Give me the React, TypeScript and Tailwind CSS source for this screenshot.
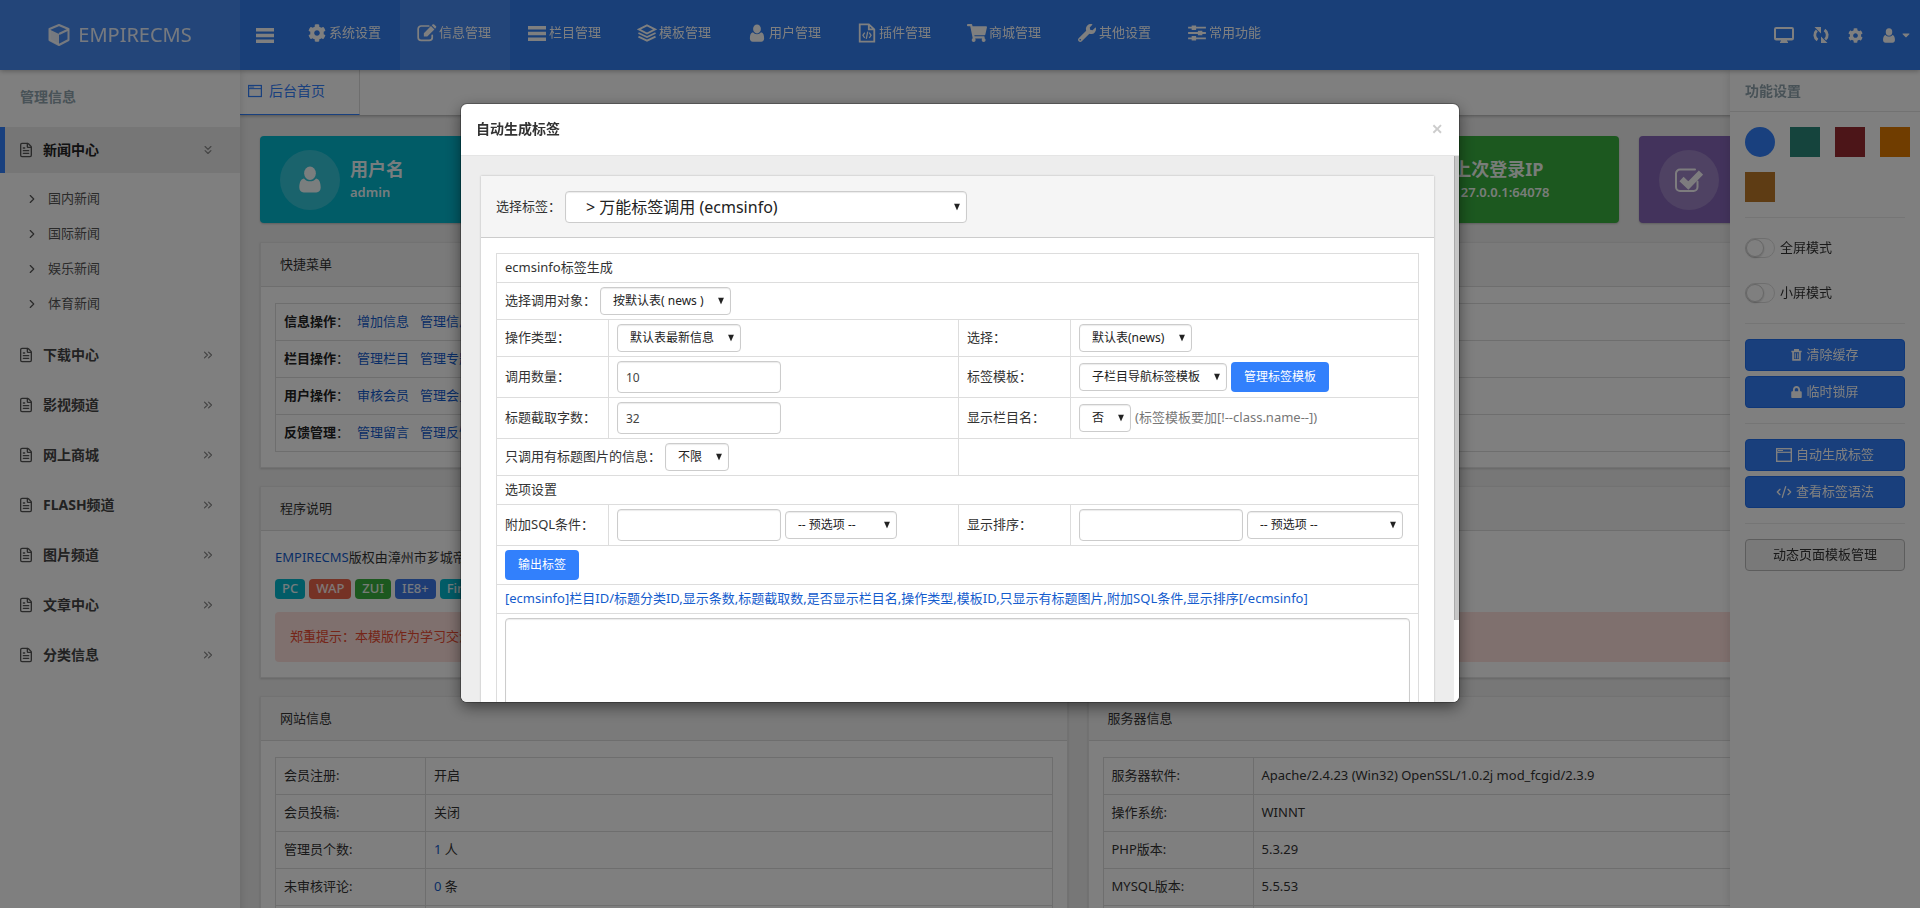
import type { ReactNode } from 'react';
import { FaCaretDown, FaCog, FaLock, FaShoppingCart, FaWrench } from 'react-icons/fa';
import { ChevronRight, ChevronsDown, ChevronsRight, CodeXml, FileText, Layers } from 'lucide-react';

interface IconProps {
  className?: string;
}

const CubeIcon = ({ className }: IconProps) => (
  <svg viewBox="0 0 22 22" className={className} aria-hidden="true">
    <path d="M11 1 L20.5 5 V16 L11 21 L1.5 16 V5 Z" fill="none" stroke="currentColor" strokeWidth="2" strokeLinejoin="round" />
    <path d="M1.5 5.5 L11 10 V21 L1.5 16 Z" fill="currentColor" />
    <path d="M11 10 L20.5 5.5" fill="none" stroke="currentColor" strokeWidth="2" />
  </svg>
);

const BarsIcon = ({ className }: IconProps) => (
  <svg viewBox="0 0 18 15" className={className} fill="currentColor" aria-hidden="true">
    <path d="M0 0 H18 V3.500 H0 Z M0 5.750 H18 V9.250 H0 Z M0 11.500 H18 V15 H0 Z" />
  </svg>
);

const UserIcon = ({ className }: IconProps) => (
  <svg viewBox="0 0 20 24" className={className} fill="currentColor" aria-hidden="true">
    <ellipse cx="10" cy="6.5" rx="5.2" ry="6" />
    <path d="M4.6 11 C1.5 11.6 .5 15 .5 19.2 C.5 21.8 2 23.5 4.4 23.5 H15.6 C18 23.5 19.5 21.8 19.5 19.2 C19.5 15 18.5 11.6 15.4 11 C14 12.7 12.2 13.6 10 13.6 C7.800 13.6 6 12.700 4.6 11 Z" />
  </svg>
);

const EditIcon = ({ className }: IconProps) => (
  <svg viewBox="0 0 22 20" className={className} aria-hidden="true">
    <path d="M13 2.200 H4.500 A3.300 3.300 0 0 0 1.200 5.500 V15 A3.300 3.300 0 0 0 4.500 18.300 H13.500 A3.300 3.300 0 0 0 16.800 15 V12.500" fill="none" stroke="currentColor" strokeWidth="1.900" strokeLinecap="round" />
    <path d="M7.500 14 V10.200 L15.400 2.300 L19.200 6.100 L11.300 14 Z M16.300 1.400 L17.500 .4 Q18.300 -.1 19 .6 L21 2.600 Q21.600 3.300 21 4 L20 5.200 Z" fill="currentColor" />
  </svg>
);

const CheckIcon = ({ className }: IconProps) => (
  <svg viewBox="0 0 28 24" className={className} aria-hidden="true">
    <path d="M20 1.500 H5 A4 4 0 0 0 1 5.500 V19 A4 4 0 0 0 5 23 H18.500 A4 4 0 0 0 22.500 19 V13.500" fill="none" stroke="currentColor" strokeWidth="2" strokeLinecap="round" />
    <path d="M6.500 11 L13.300 17.500 L26 4.500" fill="none" stroke="currentColor" strokeWidth="6" />
  </svg>
);

const FileCodeIcon = ({ className }: IconProps) => (
  <svg viewBox="0 0 18 22" className={className} fill="none" stroke="currentColor" strokeWidth="2" aria-hidden="true">
    <path d="M1 1.500 H11 L17 7 V20.500 H1 Z M11 1.500 V7 H17" />
    <path d="M6.500 10.500 L4.500 13.500 L6.500 16.500 M11.500 10.500 L13.500 13.500 L11.500 16.500 M9.800 9.500 L8.200 17.500" strokeWidth="1.400" />
  </svg>
);

const LayersIcon = ({ className }: IconProps) => (
  <svg viewBox="0 0 22 20" className={className} fill="none" stroke="currentColor" strokeWidth="2" aria-hidden="true">
    <path d="M11 1.500 L20 6 L11 10.500 L2 6 Z M1.500 10 L11 14.500 L20.500 10 M1.500 14 L11 18.500 L20.500 14" />
  </svg>
);

const SlidersIcon = ({ className }: IconProps) => (
  <svg viewBox="0 0 20 18" className={className} fill="currentColor" aria-hidden="true">
    <path d="M0 2 H4 V0.500 H9 V2 H20 V4 H9 V5.500 H4 V4 H0 Z M0 8 H11 V6.500 H16 V8 H20 V10 H16 V11.500 H11 V10 H0 Z M0 14 H4 V12.500 H9 V14 H20 V16 H9 V17.500 H4 V16 H0 Z" />
  </svg>
);

const DesktopIcon = ({ className }: IconProps) => (
  <svg viewBox="0 0 20 16" className={className} aria-hidden="true">
    <rect x="1" y="1" width="18" height="11.500" rx="1.200" fill="none" stroke="currentColor" strokeWidth="2" />
    <path d="M1 11 H19 V13 H13 V14.500 H14 V16 H6 V14.500 H7 V13 H1 Z" fill="currentColor" />
  </svg>
);

const SyncIcon = ({ className }: IconProps) => (
  <svg viewBox="0 0 16 18" className={className} aria-hidden="true">
    <path d="M4.500 14 A6 6 0 0 1 3.800 4.500 M11.500 4 A6 6 0 0 1 12.200 13.500" fill="none" stroke="currentColor" strokeWidth="2.800" />
    <path d="M1.500 1 H8 V7.500 Z M14.500 17 H8 V10.500 Z" fill="currentColor" />
  </svg>
);

const TrashIcon = ({ className }: IconProps) => (
  <svg viewBox="0 0 12 14" className={className} aria-hidden="true">
    <path d="M0 3 H12 M4 2.500 V1 H8 V2.500" fill="none" stroke="currentColor" strokeWidth="1.800" />
    <path d="M2 3 V12.800 H10 V3" fill="none" stroke="currentColor" strokeWidth="2" />
    <path d="M4.500 5 V11 M7.500 5 V11" stroke="currentColor" strokeWidth="1.200" />
  </svg>
);

const WindowIcon = ({ className }: IconProps) => (
  <svg viewBox="0 0 16 14" className={className} fill="none" stroke="currentColor" aria-hidden="true">
    <rect x=".700" y=".700" width="14.600" height="12.600" strokeWidth="1.400" />
    <path d="M1 4.300 H15" strokeWidth="1.200" />
    <path d="M2 2.500 H7" strokeWidth="1" />
  </svg>
);

const navItems = [
  { label: '系统设置', icon: <FaCog className="w-[18px] h-[18px]" /> },
  { label: '信息管理', icon: <EditIcon className="w-5 h-[18px]" />, active: true },
  { label: '栏目管理', icon: <BarsIcon className="w-[18px] h-[15px]" /> },
  { label: '模板管理', icon: <LayersIcon className="w-5 h-[18px]" /> },
  { label: '用户管理', icon: <UserIcon className="w-4 h-[18px]" /> },
  { label: '插件管理', icon: <FileCodeIcon className="w-[18px] h-5" /> },
  { label: '商城管理', icon: <FaShoppingCart className="w-5 h-[18px]" /> },
  { label: '其他设置', icon: <FaWrench className="w-[18px] h-[18px]" /> },
  { label: '常用功能', icon: <SlidersIcon className="w-[18px] h-4" /> },
];

const subItems = ['国内新闻', '国际新闻', '娱乐新闻', '体育新闻'];
const channels = ['下载中心', '影视频道', '网上商城', 'FLASH频道', '图片频道', '文章中心', '分类信息'];

const quickLinks = [
  { name: '信息操作', links: ['增加信息', '管理信息'] },
  { name: '栏目操作', links: ['管理栏目', '管理专题'] },
  { name: '用户操作', links: ['审核会员', '管理会员'] },
  { name: '反馈管理', links: ['管理留言', '管理反馈'] },
];

const tags = [
  { name: 'PC', color: 'bg-[#03b8cf]' },
  { name: 'WAP', color: 'bg-[#ea644a]' },
  { name: 'ZUI', color: 'bg-[#38b03f]' },
  { name: 'IE8+', color: 'bg-[#3c78e8]' },
  { name: 'Fire', color: 'bg-[#03b8cf]' },
];

const siteInfo: [string, ReactNode][] = [
  ['会员注册:', '开启'],
  ['会员投稿:', '关闭'],
  ['管理员个数:', <><a href="#admins" className="text-[#145ccd]">1</a> 人</>],
  ['未审核评论:', <><a href="#comments" className="text-[#145ccd]">0</a> 条</>],
  ['', ''],
];

const serverInfo: [string, ReactNode][] = [
  ['服务器软件:', 'Apache/2.4.23 (Win32) OpenSSL/1.0.2j mod_fcgid/2.3.9'],
  ['操作系统:', 'WINNT'],
  ['PHP版本:', '5.3.29'],
  ['MYSQL版本:', '5.5.53'],
  ['', ''],
];

const Header = () => (
  <header className="relative z-20 flex h-[70px] shrink-0 bg-[#327ef0] text-white shadow-[0_1px_5px_rgba(0,0,0,0.3)]">
    <a href="#home" className="flex w-60 shrink-0 items-center justify-center gap-2 bg-white/10 text-xl text-white/90">
      <CubeIcon className="h-[22px] w-[22px]" />
      EMPIRECMS
    </a>
    <button type="button" aria-label="折叠菜单" className="flex w-[50px] shrink-0 items-center justify-center">
      <BarsIcon className="h-[15px] w-[18px]" />
    </button>
    <nav className="flex">
      {navItems.map((item) => (
        <a
          key={item.label}
          href="#nav"
          className={`flex w-[110px] items-center justify-center gap-0.5 pb-1 pr-0.5 ${item.active ? 'bg-white/10' : ''}`}
        >
          <span className="flex w-5 justify-center">{item.icon}</span>
          {item.label}
        </a>
      ))}
    </nav>
    <div className="ml-auto flex items-center gap-[19px] pr-2.5">
      <button type="button" aria-label="网站首页"><DesktopIcon className="h-4 w-5" /></button>
      <button type="button" aria-label="刷新"><SyncIcon className="h-[18px] w-4" /></button>
      <button type="button" aria-label="设置"><FaCog className="h-[15px] w-[15px]" /></button>
      <button type="button" aria-label="用户" className="flex items-center gap-1.5">
        <UserIcon className="h-[15px] w-3.5" />
        <FaCaretDown className="h-3 w-2" />
      </button>
    </div>
  </header>
);

const Sidebar = () => (
  <aside className="z-10 w-60 shrink-0 bg-white shadow-[0_0_8px_rgba(0,0,0,0.15)]">
    <h2 className="flex h-[57px] items-center pb-1 pl-5 text-sm font-bold text-[#90a4ae]">管理信息</h2>
    <a href="#news" className="flex h-[46px] items-center border-l-[5px] border-[#3280fc] bg-[#ececec] pl-[13px] pr-[25px] text-sm font-bold text-[#222]">
      <FileText className="mr-[9px] h-4 w-4 text-[#555]" />
      新闻中心
      <ChevronsDown className="ml-auto h-3.5 w-3.5 text-[#888]" />
    </a>
    <ul className="pb-[11px] pt-2">
      {subItems.map((item) => (
        <li key={item}>
          <a href="#sub" className="flex h-[35px] items-center pl-[25px] text-[#555]">
            <ChevronRight className="mr-[9px] h-3.5 w-3.5" />
            {item}
          </a>
        </li>
      ))}
    </ul>
    {channels.map((item) => (
      <a key={item} href="#channel" className="mb-1 flex h-[46px] items-center pl-[18px] pr-[25px] text-sm font-bold text-[#444]">
        <FileText className="mr-[9px] h-4 w-4 text-[#555]" />
        {item}
        <ChevronsRight className="ml-auto h-3.5 w-3.5 text-[#888]" />
      </a>
    ))}
  </aside>
);

const Panel = ({ title, children }: { title: string; children: ReactNode }) => (
  <section className="border border-[#e4e4e4] bg-white shadow-[0_1px_2px_rgba(0,0,0,0.15)]">
    <h3 className="flex h-11 items-center border-b border-[#ddd] bg-[#f5f5f5] pl-[19px]">{title}</h3>
    <div className="px-3.5 pb-[15px] pt-4">{children}</div>
  </section>
);

const StatCard = ({ title, value, icon, className }: { title: string; value: string; icon: ReactNode; className: string }) => (
  <div className={`flex h-[87px] items-center overflow-hidden rounded pl-5 text-white/95 shadow-[0_1px_2px_rgba(0,0,0,0.2)] ${className}`}>
    <span className="mr-2.5 flex h-[60px] w-[60px] shrink-0 items-center justify-center rounded-full bg-white/20">{icon}</span>
    <div className="whitespace-nowrap">
      <h4 className="text-lg leading-6 font-bold">{title}</h4>
      <p className="leading-[22px] font-semibold">{value}</p>
    </div>
  </div>
);

const InfoTable = ({ rows }: { rows: [string, ReactNode][] }) => (
  <table className="w-full table-fixed border-collapse">
    <tbody>
      {rows.map(([name, value], i) => (
        <tr key={i} className="h-[37px]">
          <td className="w-[150px] border border-[#ddd] px-2">{name}</td>
          <td className="border border-[#ddd] px-2">{value}</td>
        </tr>
      ))}
    </tbody>
  </table>
);

const Content = () => (
  <main className="min-w-0 flex-1 bg-[#eee]">
    <div className="h-[45px] bg-white shadow-[0_1px_3px_rgba(0,0,0,0.3)]">
      <a href="#tab" className="flex h-[45px] w-[120px] items-center gap-[7px] border-b border-r border-b-[#3280fc] border-r-[#ddd] pb-0.5 pl-2 text-sm text-[#3280fc]">
        <WindowIcon className="h-3.5 w-3.5" />
        后台首页
      </a>
    </div>
    <div className="flex flex-col gap-[18px] py-[21px] pl-5 pr-[25px]">
      <div className="mb-px grid grid-cols-6 gap-5">
        <StatCard title="用户名" value="admin" className="bg-[#03b8cf]" icon={<UserIcon className="h-[27px] w-6" />} />
        <StatCard title="上次登录IP" value="127.0.0.1:64078" className="col-start-5 bg-[#38b03f]" icon={<Layers className="h-7 w-7" />} />
        <StatCard title="" value="" className="bg-[#8666b8]" icon={<CheckIcon className="h-6 w-7" />} />
      </div>

      <Panel title="快捷菜单">
        <table className="w-full border-collapse">
          <tbody>
            {quickLinks.map((row) => (
              <tr key={row.name} className="h-[37px]">
                <td className="border border-[#ddd] px-2">
                  <strong className="text-[#222]">{row.name}</strong>：
                  <span className="ml-2 inline-flex gap-[11px]">
                    {row.links.map((link) => (
                      <a key={link} href="#link" className="text-[#145ccd]">{link}</a>
                    ))}
                  </span>
                </td>
              </tr>
            ))}
          </tbody>
        </table>
      </Panel>

      <Panel title="程序说明">
        <p className="leading-5">
          <a href="#about" className="text-[#145ccd]">EMPIRECMS</a>版权由漳州市芗城帝
        </p>
        <div className="mt-3 flex gap-1">
          {tags.map((tag) => (
            <span key={tag.name} className={`flex h-5 items-center rounded px-[7px] font-medium text-white/90 ${tag.color}`}>
              {tag.name}
            </span>
          ))}
        </div>
        <p className="mt-[13px] flex h-[50px] items-center rounded bg-[#ffe0dc] pl-[15px] text-[#ea4a30]">
          郑重提示：本模版作为学习交流
        </p>
      </Panel>

      <div className="grid grid-cols-2 gap-5">
        <Panel title="网站信息"><InfoTable rows={siteInfo} /></Panel>
        <Panel title="服务器信息"><InfoTable rows={serverInfo} /></Panel>
      </div>
    </div>
  </main>
);

const SideButton = ({ icon, children }: { icon: ReactNode; children: ReactNode }) => (
  <button type="button" className="flex h-8 w-full items-center justify-center gap-1 rounded border border-[#1f6ff0] bg-[#327ef8] text-white">
    {icon}
    {children}
  </button>
);

const Toggle = ({ label }: { label: string }) => (
  <label className="flex h-5 items-center gap-[5px]">
    <input
      type="checkbox"
      className="h-5 w-[30px] appearance-none rounded-full border border-[#ddd] before:block before:h-[18px] before:w-[18px] before:rounded-full before:border before:border-[#ccc] before:shadow-[0_1px_2px_rgba(0,0,0,0.2)] before:content-['']"
    />
    {label}
  </label>
);

const SettingsPanel = () => (
  <aside className="fixed bottom-0 right-0 top-[70px] z-10 w-[190px] bg-white shadow-[0_0_10px_rgba(0,0,0,0.15)]">
    <h2 className="flex h-[42px] items-center border-b border-[#e5e5e5] pl-[15px] text-sm font-bold text-[#90a4ae]">功能设置</h2>
    <div className="px-[15px] pt-[15px]">
      <div className="-mr-2.5 flex flex-wrap gap-[15px]">
        <button type="button" aria-label="蓝色" className="h-[30px] w-[30px] rounded-full bg-[#3280fc]" />
        <button type="button" aria-label="绿色" className="h-[30px] w-[30px] bg-[#2b897b]" />
        <button type="button" aria-label="红色" className="h-[30px] w-[30px] bg-[#982a31]" />
        <button type="button" aria-label="橙色" className="h-[30px] w-[30px] bg-[#e07a00]" />
        <button type="button" aria-label="棕色" className="h-[30px] w-[30px] bg-[#bd7828]" />
      </div>
      <div className="mt-[15px] flex flex-col gap-[25px] border-t border-[#eaeaea] py-5">
        <Toggle label="全屏模式" />
        <Toggle label="小屏模式" />
      </div>
      <div className="flex flex-col gap-[5px] border-t border-[#eaeaea] py-[15px]">
        <SideButton icon={<TrashIcon className="h-3 w-[11px]" />}>清除缓存</SideButton>
        <SideButton icon={<FaLock className="h-3 w-[11px]" />}>临时锁屏</SideButton>
      </div>
      <div className="flex flex-col gap-[5px] border-t border-[#eaeaea] py-[15px]">
        <SideButton icon={<WindowIcon className="h-3.5 w-4" />}>自动生成标签</SideButton>
        <SideButton icon={<CodeXml className="h-4 w-4" />}>查看标签语法</SideButton>
      </div>
      <div className="border-t border-[#eaeaea] py-[15px]">
        <button type="button" className="h-8 w-full rounded border border-[#bbb] bg-[#f2f2f2] text-[#333]">动态页面模板管理</button>
      </div>
    </div>
  </aside>
);

interface SelectProps {
  id: string;
  label: string;
  value: string;
  className: string;
}

const Select = ({ id, label, value, className }: SelectProps) => (
  <span className="relative inline-flex shrink-0">
    <select
      id={id}
      aria-label={label}
      className={`appearance-none rounded border border-[#ccc] bg-white text-[#222] shadow-[inset_0_1px_1px_rgba(0,0,0,0.08)] ${className}`}
    >
      <option>{value}</option>
    </select>
    <svg viewBox="0 0 6 7" className="pointer-events-none absolute right-[7px] top-1/2 h-[7px] w-1.5 -translate-y-1/2" aria-hidden="true">
      <path d="M0 0 H6 L3 7 Z" fill="#222" />
    </svg>
  </span>
);

const TextInput = ({ id, label, value }: { id: string; label: string; value?: string }) => (
  <input
    id={id}
    aria-label={label}
    type="text"
    defaultValue={value}
    className="h-8 w-[164px] shrink-0 rounded border border-[#ccc] bg-white px-2 text-xs text-[#444] shadow-[inset_0_1px_1px_rgba(0,0,0,0.08)]"
  />
);

const cell = 'border border-[#ddd] px-2';
const smallSelect = 'h-7 pl-3 text-xs';

const TagForm = () => (
  <table className="w-full table-fixed border-collapse">
    <colgroup>
      <col className="w-28" />
      <col className="w-[350px]" />
      <col className="w-28" />
      <col />
    </colgroup>
    <tbody>
      <tr className="h-[29px]">
        <td colSpan={4} className={cell}>ecmsinfo标签生成</td>
      </tr>
      <tr className="h-[37px]">
        <td colSpan={4} className={cell}>
          <div className="flex items-center gap-1">
            <label htmlFor="target">选择调用对象：</label>
            <Select id="target" label="选择调用对象" value="按默认表( news )" className={`w-[131px] ${smallSelect}`} />
          </div>
        </td>
      </tr>
      <tr className="h-[37px]">
        <td className={cell}>操作类型：</td>
        <td className={cell}>
          <div className="flex"><Select id="type" label="操作类型" value="默认表最新信息" className={`w-[124px] ${smallSelect}`} /></div>
        </td>
        <td className={cell}>选择：</td>
        <td className={cell}>
          <div className="flex"><Select id="table" label="选择" value="默认表(news)" className={`w-[113px] ${smallSelect}`} /></div>
        </td>
      </tr>
      <tr className="h-[41px]">
        <td className={cell}>调用数量：</td>
        <td className={cell}>
          <div className="flex"><TextInput id="count" label="调用数量" value="10" /></div>
        </td>
        <td className={cell}>标签模板：</td>
        <td className={cell}>
          <div className="flex items-center gap-1">
            <Select id="template" label="标签模板" value="子栏目导航标签模板" className={`w-[148px] ${smallSelect}`} />
            <button type="button" className="h-[30px] w-[98px] rounded bg-[#3280fc] text-xs text-white">管理标签模板</button>
          </div>
        </td>
      </tr>
      <tr className="h-[41px]">
        <td className={cell}>标题截取字数：</td>
        <td className={cell}>
          <div className="flex"><TextInput id="length" label="标题截取字数" value="32" /></div>
        </td>
        <td className={cell}>显示栏目名：</td>
        <td className={cell}>
          <div className="flex items-center gap-1">
            <Select id="showclass" label="显示栏目名" value="否" className={`w-[52px] ${smallSelect}`} />
            <span className="text-[#777]">(标签模板要加[!--class.name--])</span>
          </div>
        </td>
      </tr>
      <tr className="h-[37px]">
        <td colSpan={2} className={cell}>
          <div className="flex items-center gap-1">
            <label htmlFor="pic">只调用有标题图片的信息：</label>
            <Select id="pic" label="只调用有标题图片的信息" value="不限" className={`w-16 ${smallSelect}`} />
          </div>
        </td>
        <td colSpan={2} className={cell} />
      </tr>
      <tr className="h-[29px]">
        <td colSpan={4} className={cell}>选项设置</td>
      </tr>
      <tr className="h-[41px]">
        <td className={cell}>附加SQL条件：</td>
        <td className={cell}>
          <div className="flex items-center gap-1">
            <TextInput id="sql" label="附加SQL条件" />
            <Select id="sqlpreset" label="SQL预选项" value="-- 预选项 --" className={`w-28 ${smallSelect}`} />
          </div>
        </td>
        <td className={cell}>显示排序：</td>
        <td className={cell}>
          <div className="flex items-center gap-1">
            <TextInput id="order" label="显示排序" />
            <Select id="orderpreset" label="排序预选项" value="-- 预选项 --" className={`w-[156px] ${smallSelect}`} />
          </div>
        </td>
      </tr>
      <tr className="h-[39px]">
        <td colSpan={4} className={cell}>
          <button type="button" className="block h-[30px] w-[74px] rounded bg-[#3280fc] text-xs text-white">输出标签</button>
        </td>
      </tr>
      <tr className="h-[29px]">
        <td colSpan={4} className={`${cell} text-[#145ccd]`}>
          [ecmsinfo]栏目ID/标题分类ID,显示条数,标题截取数,是否显示栏目名,操作类型,模板ID,只显示有标题图片,附加SQL条件,显示排序[/ecmsinfo]
        </td>
      </tr>
      <tr>
        <td colSpan={4} className={`${cell} py-1`}>
          <textarea aria-label="标签代码" className="block h-[120px] w-full resize-none rounded border border-[#ccc] shadow-[inset_0_1px_1px_rgba(0,0,0,0.08)]" />
        </td>
      </tr>
    </tbody>
  </table>
);

const TagModal = () => (
  <div className="fixed inset-0 z-30 bg-black/50 pt-[104px]">
    <div role="dialog" aria-label="自动生成标签" className="mx-auto max-w-[998px] overflow-hidden rounded-md bg-white shadow-[0_5px_15px_rgba(0,0,0,0.5),0_0_0_1px_rgba(0,0,0,0.25)]">
      <div className="flex h-[52px] items-center justify-between border-b border-[#e5e5e5] pb-0.5 pl-[15px] pr-4">
        <h2 className="text-sm font-bold text-[#333]">自动生成标签</h2>
        <button type="button" aria-label="关闭" className="text-xl leading-5 font-semibold text-[#ccc]">×</button>
      </div>
      <div className="flex h-[546px]">
        <div className="min-w-0 flex-1 overflow-y-auto bg-[#ededed] p-5 [scrollbar-width:none]">
          <div className="bg-white shadow-[0_0_2px_rgba(0,0,0,0.25)]">
            <div className="flex h-[62px] items-center border-b border-[#ccc] bg-[#f5f5f5] px-[15px]">
              <label htmlFor="tag" className="mr-1">选择标签：</label>
              <Select id="tag" label="选择标签" value="> 万能标签调用 (ecmsinfo)" className="h-8 w-[402px] pl-5 text-base" />
            </div>
            <div className="p-[15px]">
              <TagForm />
            </div>
          </div>
        </div>
        <div className="w-[5px] bg-white">
          <div className="h-[464px] border-l border-[#aaa] bg-[#c6c6c6]" />
        </div>
      </div>
    </div>
  </div>
);

const App = () => {
  return (
    <div className="flex h-screen flex-col overflow-hidden bg-[#eee] font-['Noto_Sans','Noto_Sans_CJK_SC',sans-serif] text-[13px] text-[#333]">
      <Header />
      <div className="flex flex-1">
        <Sidebar />
        <Content />
      </div>
      <SettingsPanel />
      <TagModal />
    </div>
  );
};

export default App;
